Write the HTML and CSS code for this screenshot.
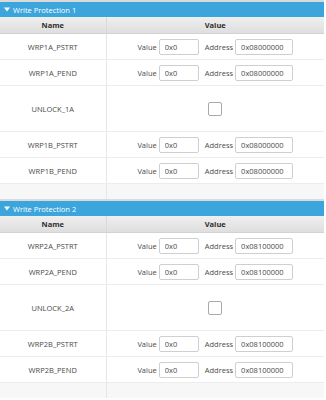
FILE: index.html
```html
<!DOCTYPE html>
<html lang="en">
<head>
<meta charset="utf-8">
<title>Option Bytes</title>
<link rel="stylesheet" href="styles.css">
</head>
<body>
<div class="panel">

 <div class="section">
  <div class="bar">
   <svg class="arrow" width="6" height="5" viewBox="0 0 6 5"><path d="M0 0.5H6L3 4.5Z" fill="#fff"/></svg>
   <span>Write Protection 1</span>
  </div>
  <table class="grid">
   <colgroup><col class="c-name"><col></colgroup>
   <thead><tr><th>Name</th><th>Value</th></tr></thead>
   <tbody>
    <tr><td>WRP1A_PSTRT</td><td><div class="pair"><label>Value</label><input class="v" value="0x0"><label>Address</label><input class="a" value="0x08000000"></div></td></tr>
    <tr><td>WRP1A_PEND</td><td><div class="pair"><label>Value</label><input class="v" value="0x0"><label>Address</label><input class="a" value="0x08000000"></div></td></tr>
    <tr class="tall"><td>UNLOCK_1A</td><td><span class="check"></span></td></tr>
    <tr><td>WRP1B_PSTRT</td><td><div class="pair"><label>Value</label><input class="v" value="0x0"><label>Address</label><input class="a" value="0x08000000"></div></td></tr>
    <tr><td>WRP1B_PEND</td><td><div class="pair"><label>Value</label><input class="v" value="0x0"><label>Address</label><input class="a" value="0x08000000"></div></td></tr>
    <tr class="empty"><td></td><td></td></tr>
   </tbody>
  </table>
 </div>

 <div class="section">
  <div class="bar">
   <svg class="arrow" width="6" height="5" viewBox="0 0 6 5"><path d="M0 0.5H6L3 4.5Z" fill="#fff"/></svg>
   <span>Write Protection 2</span>
  </div>
  <table class="grid">
   <colgroup><col class="c-name"><col></colgroup>
   <thead><tr><th>Name</th><th>Value</th></tr></thead>
   <tbody>
    <tr><td>WRP2A_PSTRT</td><td><div class="pair"><label>Value</label><input class="v" value="0x0"><label>Address</label><input class="a" value="0x08100000"></div></td></tr>
    <tr><td>WRP2A_PEND</td><td><div class="pair"><label>Value</label><input class="v" value="0x0"><label>Address</label><input class="a" value="0x08100000"></div></td></tr>
    <tr class="tall"><td>UNLOCK_2A</td><td><span class="check"></span></td></tr>
    <tr><td>WRP2B_PSTRT</td><td><div class="pair"><label>Value</label><input class="v" value="0x0"><label>Address</label><input class="a" value="0x08100000"></div></td></tr>
    <tr><td>WRP2B_PEND</td><td><div class="pair"><label>Value</label><input class="v" value="0x0"><label>Address</label><input class="a" value="0x08100000"></div></td></tr>
    <tr class="empty"><td></td><td></td></tr>
   </tbody>
  </table>
 </div>

</div>
</body>
</html>
```

FILE: styles.css
```css
body{
  margin: 0;
  background: #fff;
  font-family: 'Open Sans', Arial, sans-serif;
  font-size: 7.5px;
  color: #4a4a4a;
}
.panel{
  width: 324px;
}
.section{
  border-top: 2px solid #dadada;
}
.bar{
  height: 15px;
  background: #3ba5dc;
  color: #fff;
  display: flex;
  align-items: center;
  padding-left: 4px;
  gap: 3px;
}
.arrow{
  display: block;
}
.grid{
  width: 100%;
  border-collapse: collapse;
  table-layout: fixed;
}
.c-name{
  width: 106px;
}
.grid th{
  height: 16px;
  padding: 0;
  background: linear-gradient(to bottom, #efefef 0%, #dedede 100%);
  border-bottom: 1px solid #d2d2d2;
  border-right: 1px solid #d8d8d8;
  color: #2e2e2e;
  font-weight: bold;
  text-align: center;
}
.grid th:last-child{
  border-right: 0;
}
.grid td{
  height: 25px;
  padding: 0;
  border-bottom: 1px solid #ececec;
  border-right: 1px solid #e6e6e6;
  text-align: center;
}
.grid td:last-child{
  border-right: 0;
}
.grid tr.tall td{
  height: 45px;
}
.grid tr.empty td{
  height: 15px;
  background: #f7f7f7;
  border-bottom: 0;
}
.pair{
  display: flex;
  justify-content: center;
  align-items: center;
}
.pair label{
  margin-right: 2px;
}
.pair input{
  box-sizing: border-box;
  height: 16px;
  border: 1px solid #cfcfcf;
  border-radius: 2px;
  padding: 0 0 0 5px;
  font-family: 'Open Sans', Arial, sans-serif;
  font-size: 7.5px;
  color: #4a4a4a;
  background: #fff;
}
.pair input.v{
  width: 40px;
  margin-right: 6px;
}
.pair input.a{
  width: 58px;
}
.check{
  display: inline-block;
  width: 12px;
  height: 12px;
  border: 1px solid #a9a9a9;
  border-radius: 2px;
  background: #fff;
  vertical-align: middle;
}
```
